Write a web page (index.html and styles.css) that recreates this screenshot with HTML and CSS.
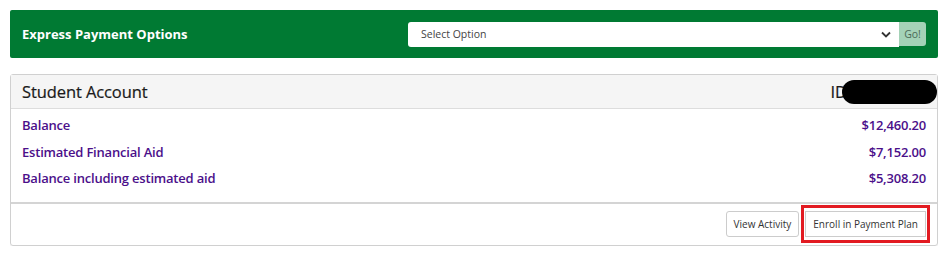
FILE: index.html
```html
<!DOCTYPE html>
<html>
<head>
<meta charset="utf-8">
<link rel="stylesheet" href="styles.css">
</head>
<body>
<div class="express">
  <div class="express-title">Express Payment Options</div>
  <div class="express-form">
    <div class="select">
      <span>Select Option</span>
      <svg class="chev" width="10" height="7" viewBox="0 0 10 7"><path d="M1 1.5 L5 5.5 L9 1.5" fill="none" stroke="#333" stroke-width="1.8"/></svg>
    </div>
    <div class="go">Go!</div>
  </div>
</div>
<div class="card">
  <div class="card-head">
    <div class="card-title">Student Account</div>
    <div class="card-id">ID<span class="redact"></span></div>
  </div>
  <div class="card-body">
    <div class="row"><span>Balance</span><span>$12,460.20</span></div>
    <div class="row"><span>Estimated Financial Aid</span><span>$7,152.00</span></div>
    <div class="row"><span>Balance including estimated aid</span><span>$5,308.20</span></div>
  </div>
  <div class="card-foot">
    <div class="btn">View Activity</div>
    <div class="highlight"><div class="btn">Enroll in Payment Plan</div></div>
  </div>
</div>
</body>
</html>
```

FILE: styles.css
```css
body {
  margin: 10px 11px 10px 10px;
  font-family: "Open Sans", "Noto Sans", sans-serif;
  color: #333;
  background: #fff;
}
.express {
  background: #007a33;
  height: 48px;
  border-radius: 2px;
  display: flex;
  align-items: center;
  padding: 0 12px;
  margin-bottom: 16px;
}
.express-title {
  color: #fff;
  font-weight: 700;
  font-size: 13px;
  letter-spacing: 0;
}
.express-form {
  display: flex;
  align-items: center;
  margin-left: auto;
}
.select {
  width: 470px;
  height: 25px;
  background: #fff;
  border-radius: 3px 0 0 3px;
  display: flex;
  align-items: center;
  padding: 0 8px 0 13px;
  font-size: 10.5px;
  color: #444;
}
.chev { margin-left: auto; }
.go {
  width: 27px;
  height: 24px;
  background: #a4d2b7;
  border-radius: 0 3px 3px 0;
  font-size: 10.5px;
  color: #4a6a58;
  display: flex;
  align-items: center;
  justify-content: center;
}
.card {
  border: 1px solid #d0d0d0;
  border-radius: 3px;
  box-shadow: 0 1px 1px rgba(0,0,0,0.08);
}
.card-head {
  background: #f5f5f5;
  height: 33px;
  border-bottom: 1px solid #ddd;
  display: flex;
  align-items: center;
  padding-left: 11px;
}
.card-title {
  font-size: 16.5px;
  color: #1a1a1a;
  letter-spacing: -0.1px;
  -webkit-text-stroke: 0.2px #1a1a1a;
}
.card-id {
  margin-left: auto;
  display: flex;
  align-items: center;
  font-size: 16.5px;
  color: #1a1a1a;
  -webkit-text-stroke: 0.2px #1a1a1a;
}
.redact {
  display: inline-block;
  width: 95px;
  height: 24px;
  background: #000;
  border-radius: 12px;
  margin-left: -5px;
}
.card-body {
  padding: 3px 11px 10px 11px;
  border-bottom: 2px solid #d4d4d4;
}
.row {
  display: flex;
  justify-content: space-between;
  height: 26.5px;
  align-items: center;
  font-size: 13px;
  font-weight: 600;
  color: #4b0f8a;
  letter-spacing: -0.2px;
}
.card-foot {
  display: flex;
  justify-content: flex-end;
  align-items: center;
  padding: 0 7px 0 0;
  height: 41px;
}
.btn {
  border: 1px solid #ccc;
  border-radius: 3px;
  background: #fff;
  font-size: 10px;
  color: #333;
  height: 24px;
  padding: 0 7px;
  display: flex;
  align-items: center;
}
.highlight {
  border: 3px solid #e21b22;
  padding: 3px 1px 3px 1px;
  margin-left: 2px;
}
.highlight .btn { border-radius: 0; }
```
